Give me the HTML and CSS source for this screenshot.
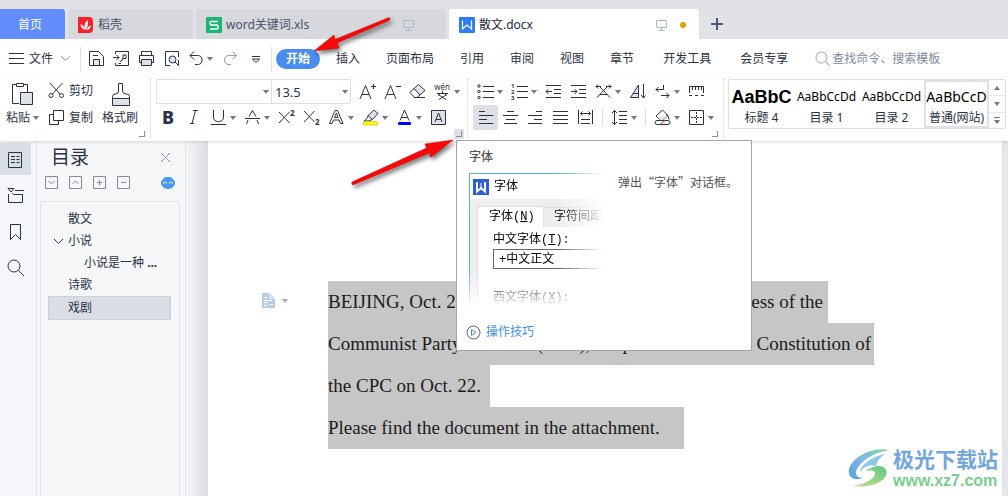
FILE: index.html
```html
<!DOCTYPE html>
<html lang="zh-CN">
<head>
<meta charset="utf-8">
<title>散文.docx</title>
<link rel="stylesheet" href="styles.css">
</head>
<body>
<header class="tabs">
  <button class="tab tab-home">首页</button>
  <button class="tab tab-docer">
    <svg width="16" height="16" viewBox="0 0 16 16"><rect width="15" height="16" rx="4" fill="#f5222d"/><path d="M0 0h8v8H0zM0 10h5v6H0z" fill="#f5222d"/><path d="M7.500 13C5.500 9 7 5.500 9.500 3c.800 4 .500 7-2 10zM7 13C4 12 2.500 9.500 2.500 7 5 8 6.500 10 7 13zM8.500 13c1-2.500 2.500-4 4.500-4.500-.2 2.500-2 4.500-4.500 4.500z" fill="#fff"/></svg>
    <span>稻壳</span>
  </button>
  <button class="tab tab-file">
    <svg width="16" height="16" viewBox="0 0 16 16"><rect width="16" height="16" rx="1" fill="#18b574"/><path d="M12 4.500H5q-1 0-1 1v1.500q0 1 1 1h6q1 0 1 1v2q0 1-1 1H4" fill="none" stroke="#fff" stroke-width="1.300"/></svg>
    <span>word关键词.xls</span>
    <svg class="screen" width="13" height="13" viewBox="0 0 13 13"><path d="M1.500 1.500h10v7h-10zM6.500 8.500v3M3.500 11.500h6"/></svg>
  </button>
  <button class="tab tab-file active">
    <svg width="16" height="16" viewBox="0 0 16 16"><rect width="16" height="16" rx="1" fill="#2f7df4"/><path d="M3.500 3.500v8.500l4.500-4 4.500 4V3.500" fill="none" stroke="#fff" stroke-width="1.200"/></svg>
    <span>散文.docx</span>
    <svg class="screen" width="13" height="13" viewBox="0 0 13 13"><path d="M1.500 1.500h10v7h-10zM6.500 8.500v3M3.500 11.500h6"/></svg>
    <i class="unsaved"></i>
  </button>
  <button class="tab-add" aria-label="新建"><svg width="14" height="14" viewBox="0 0 14 14"><path d="M1 7h12M7 1v12" stroke="#4b5873" stroke-width="2"/></svg></button>
</header>

<nav class="menu">
  <button class="file">
    <svg class="ic" width="17" height="17" viewBox="0 0 17 17"><path d="M1 3.500h15M1 8.500h15M1 13.500h15"/></svg>
    <span>文件</span>
    <svg class="ic pale" width="11" height="7" viewBox="0 0 11 7"><path d="M1 1l4.500 4.500L10 1"/></svg>
  </button>
  <div class="quick">
    <button aria-label="保存"><svg class="ic" width="17" height="17" viewBox="0 0 17 17"><path d="M5.500 9.500h6v6h-6z" class="soft"/><path d="M1.500 15.500v-14h9l5 5v9zM5 5.500h5"/></svg></button>
    <button aria-label="输出为PDF"><svg class="ic" width="17" height="17" viewBox="0 0 17 17"><path d="M2.500 4V1.500h13v14h-13V13M0 7.500h6M3.500 5L6 7.500 3.500 10M7 11.500q3-1 3-3.500v-3h3v3.500h-3M8 13.500h-2.500"/></svg></button>
    <button aria-label="打印"><svg class="ic" width="17" height="17" viewBox="0 0 17 17"><path d="M3.500 5V1.500h10V5M3.500 12.500h-2v-7h14v7h-2"/><path d="M3.500 9.500h10v6h-10z" class="soft"/></svg></button>
    <button aria-label="打印预览"><svg class="ic" width="17" height="17" viewBox="0 0 17 17"><path d="M7 15.500H2.500v-14h13V7M15.500 10v5.500"/><circle cx="9.500" cy="9.500" r="3.500" class="soft"/><path d="M12 12l3.500 3.500"/></svg></button>
    <button class="drop" aria-label="撤销"><svg class="ic" width="17" height="17" viewBox="0 0 17 17"><path d="M6 1.500l-4 4 4 4M2 5.500h7.500q4.500 0 4.500 4.500t-4.500 4.500H7"/></svg></button>
    <button aria-label="恢复"><svg class="ic pale" width="17" height="17" viewBox="0 0 17 17"><path d="M10.500 1.500l4 4-4 4M14.500 5.500H7q-4.500 0-4.500 4.500T7 14.500h2"/></svg></button>
    <button aria-label="自定义"><svg class="ic" width="17" height="17" viewBox="0 0 17 17"><path d="M5 6.500h8M5.500 9L9 12.500 12.500 9z"/></svg></button>
  </div>
  <div class="pages">
    <button class="on">开始</button>
    <button>插入</button>
    <button>页面布局</button>
    <button>引用</button>
    <button>审阅</button>
    <button>视图</button>
    <button>章节</button>
    <button>开发工具</button>
    <button>会员专享</button>
  </div>
  <label class="search">
    <svg class="ic" width="15" height="15" viewBox="0 0 15 15"><circle cx="6.500" cy="6.500" r="5.500"/><path d="M10.500 10.500l4 4"/></svg>
    <input type="text" placeholder="查找命令、搜索模板">
  </label>
</nav>

<section class="ribbon">
  <div class="group clip">
    <button class="big paste">
      <svg class="ic" width="23" height="25" viewBox="0 0 23 25"><path d="M8 21.500H1.500v-19h4M12.500 2.500h4V10M5.500 1.500h7v3h-7z"/><path d="M9.500 10.500h12v12h-12z" class="soft"/></svg>
      <span class="drop-text">粘贴</span>
    </button>
    <div class="stack">
      <button><svg class="ic" width="17" height="17" viewBox="0 0 17 17"><circle cx="3" cy="13.500" r="2"/><circle cx="13.500" cy="13.500" r="2"/><path d="M2 1l10 11M14.500 1l-10 11"/></svg><span>剪切</span></button>
      <button><svg class="ic" width="17" height="17" viewBox="0 0 17 17"><path d="M5.500 1.500h10v10h-10zM5.500 5.500h-4v10h9v-4"/></svg><span>复制</span></button>
    </div>
    <button class="big">
      <svg class="ic" width="23" height="25" viewBox="0 0 23 25"><path d="M3.500 16.500v7h17v-7z" class="soft"/><path d="M9.500 9V1.500h4V9q0 3 4 3 3 0 3 2.500v2h-17v-2q0-2.500 3-2.500 3 0 3-3z"/></svg>
      <span>格式刷</span>
    </button>
    <button class="launch" aria-label="剪贴板设置"></button>
  </div>

  <div class="group font">
    <div class="row">
      <div class="combo"><input type="text" aria-label="字体"><i class="caret"></i></div>
      <div class="combo size"><input type="text" aria-label="字号" value="13.5"><i class="caret"></i></div>
      <div class="tools">
        <button aria-label="增大字号"><svg class="ic" width="17" height="17" viewBox="0 0 17 17"><path d="M1 16L6.500 2.500 12 16M3 11.500h7M12 3.500h5M14.500 1v5"/></svg></button>
        <button aria-label="减小字号"><svg class="ic" width="17" height="17" viewBox="0 0 17 17"><path d="M1 16L6.500 2.500 12 16M3 11.500h7M12 3.500h5"/></svg></button>
        <button aria-label="清除格式"><svg class="ic" width="17" height="17" viewBox="0 0 17 17"><path d="M5 5.500L9.500 1.500l6.500 6-5 4.500z" class="soft"/><path d="M5 5.500L.800 9.500l5 5H8l3-2.500M5 14.500h11"/></svg></button>
        <button class="drop" aria-label="拼音"><svg class="ic" width="17" height="17" viewBox="0 0 17 17"><text x="8" y="7" font-size="8" text-anchor="middle">wén</text><path d="M8.500 8v2M3 10.500h11M6 11l-2 1.500M11 11l2 1.500M5 12l7 4.500M12 12l-7 4.500"/></svg></button>
      </div>
    </div>
    <div class="row">
      <button aria-label="加粗"><svg class="ic" width="17" height="17" viewBox="0 0 17 17"><text x="8" y="15" font-size="18" font-weight="800" text-anchor="middle">B</text></svg></button>
      <button aria-label="倾斜"><svg class="ic" width="17" height="17" viewBox="0 0 17 17"><path d="M8 1.500h5M5 14.500h4M10.500 1.500L7 14.500"/></svg></button>
      <button class="drop" aria-label="下划线"><svg class="ic" width="17" height="17" viewBox="0 0 17 17"><path d="M3.500 1v7q0 4.500 5 4.500t5-4.500V1M1 15.500h15"/></svg></button>
      <button class="drop" aria-label="删除线"><svg class="ic" width="17" height="17" viewBox="0 0 17 17"><path d="M5 7.500L8.500 1.500l3.500 6M1 9.500h15M4 11l-1.500 4M13 11l1.500 4"/></svg></button>
      <button aria-label="上标"><svg class="ic" width="17" height="17" viewBox="0 0 17 17"><path d="M1 3l10.500 11M11.500 3L1 14"/><text x="12" y="7" font-size="8" font-weight="700">2</text></svg></button>
      <button aria-label="下标"><svg class="ic" width="17" height="17" viewBox="0 0 17 17"><path d="M1 2l10.500 11M11.500 2L1 13"/><text x="12" y="16" font-size="8" font-weight="700">2</text></svg></button>
      <button class="drop" aria-label="文字效果"><svg class="ic" width="17" height="17" viewBox="0 0 17 17"><path d="M1.500 14.500L7 1.500h2.500L15 14.500h-2.500L11 11H5.500L4 14.500zM6.500 8.500h3.500L8.300 4z"/></svg></button>
      <button class="drop" aria-label="突出显示"><svg class="ic" width="17" height="17" viewBox="0 0 17 17"><path d="M6 6.500L12 1l4 3.500-5.500 6z" class="soft"/><path d="M6 6.500l-1 3-3 2.500h5l3-1.500"/><rect x="1" y="12.500" width="15" height="3.500" rx="1.500" class="yellow"/></svg></button>
      <button class="drop" aria-label="字体颜色"><svg class="ic" width="17" height="17" viewBox="0 0 17 17"><path d="M4 11.500L8.500 1 13 11.500M5.500 8.500h6"/><rect x="2" y="13" width="13" height="3" rx="1" class="blue"/></svg></button>
      <button aria-label="字符底纹"><svg class="ic" width="17" height="17" viewBox="0 0 17 17"><path d="M1.500 1.500h14v14h-14z" class="soft"/><path d="M5 13l3.500-9 3.500 9M6 10.500h5"/></svg></button>
    </div>
    <button class="launch hover" aria-label="字体设置"></button>

    <aside class="tip" role="tooltip">
      <h2>字体</h2>
      <div class="tip-body">
        <div class="shot">
          <div class="shot-title">
            <svg width="16" height="16" viewBox="0 0 16 16"><rect width="16" height="16" fill="#2c5fd6"/><path d="M4 3v9.500l4-3.500 4 3.500V3" fill="none" stroke="#fff" stroke-width="2"/><path d="M8 4v6" stroke="#fff"/></svg>
            <span>字体</span>
          </div>
          <div class="shot-tabs"><span class="cur">字体(<u>N</u>)</span><span class="next">字符间距</span></div>
          <div class="shot-form">
            <p>中文字体(<u>T</u>):</p>
            <div class="field">+中文正文</div>
            <p class="west">西文字体(<u>X</u>):</p>
          </div>
        </div>
        <p class="note">弹出“字体”对话框。</p>
      </div>
      <a class="more" href="#"><svg width="15" height="15" viewBox="0 0 15 15" fill="none"><circle cx="7.500" cy="7.500" r="6.500" stroke="#666"/><path d="M5.500 4.500v6l4.500-3z" stroke="#3d8df5"/></svg><span>操作技巧</span></a>
    </aside>
  </div>

  <div class="group para">
    <div class="row">
      <button class="drop" aria-label="项目符号"><svg class="ic" width="17" height="17" viewBox="0 0 17 17"><path d="M6 3.500h11M6 8.500h11M6 14.500h11"/><circle cx="2" cy="3" r="1.200"/><circle cx="2" cy="8.500" r="1.200"/><circle cx="2" cy="14.500" r="1.200"/></svg></button>
      <button class="drop" aria-label="编号"><svg class="ic" width="17" height="17" viewBox="0 0 17 17"><path d="M6 3.500h11M6 8.500h11M6 14.500h11"/><g font-size="6" font-weight="700"><text x="0" y="5">1</text><text x="0" y="11">2</text><text x="0" y="17">3</text></g></svg></button>
      <button aria-label="减少缩进"><svg class="ic" width="17" height="17" viewBox="0 0 17 17"><path d="M1 2.500h15M9 6.500h7M9 10.500h7M1 14.500h15M1 8.500h6M3.500 6L1 8.500 3.500 11"/></svg></button>
      <button aria-label="增加缩进"><svg class="ic" width="17" height="17" viewBox="0 0 17 17"><path d="M1 2.500h15M9 6.500h7M9 10.500h7M1 14.500h15M1 8.500h6M4.500 6L7 8.500 4.500 11"/></svg></button>
      <button class="drop" aria-label="中文版式"><svg class="ic" width="17" height="17" viewBox="0 0 17 17"><path d="M1 3.500h5M3 1.500l-2 2 2 2M16 3.500h-5M14 1.500l2 2-2 2M2 14.500L12 4M15 14.500L5 4M5 11.500h7"/></svg></button>
      <button aria-label="排序"><svg class="ic" width="17" height="17" viewBox="0 0 17 17"><path d="M1.500 14.500L9.500 2v12.500zM4 10.500h5.500" class="soft"/><path d="M14.500 1v14M12 12l2.500 3 2-2.500"/></svg></button>
      <button class="drop" aria-label="换行符"><svg class="ic" width="17" height="17" viewBox="0 0 17 17"><path d="M9.500 2v4.500H2M4.500 4L2 6.500 4.500 9M7 12.500h8M12.500 10l2.500 2.500-2.500 2.500"/></svg></button>
      <button aria-label="标尺"><svg class="ic" width="17" height="17" viewBox="0 0 17 17"><path d="M1.500 10V3.500h14V10M4.500 4v3M7.500 4v3M10.500 4v3M13.500 4v3M1 12.500h3M7 12.500h3M13 12.500h3"/></svg></button>
    </div>
    <div class="row">
      <button class="pressed" aria-label="左对齐"><svg class="ic" width="17" height="17" viewBox="0 0 17 17"><path d="M2 2.500h6M2 6.500h14M2 10.500h8M2 14.500h14"/></svg></button>
      <button aria-label="居中"><svg class="ic" width="17" height="17" viewBox="0 0 17 17"><path d="M5 2.500h7M1 6.500h15M4 10.500h9M2 14.500h13"/></svg></button>
      <button aria-label="右对齐"><svg class="ic" width="17" height="17" viewBox="0 0 17 17"><path d="M9 2.500h6M1 6.500h14M7 10.500h8M1 14.500h14"/></svg></button>
      <button aria-label="两端对齐"><svg class="ic" width="17" height="17" viewBox="0 0 17 17"><path d="M1 2.500h15M1 6.500h15M1 10.500h15M1 14.500h15"/></svg></button>
      <button aria-label="分散对齐"><svg class="ic" width="17" height="17" viewBox="0 0 17 17"><path d="M1.500 1v14M15.500 1v14M3 4.500h11M5.500 2.500l-2 2 2 2M11.500 2.500l2 2-2 2M4 10.500h9M4 14.500h9"/></svg></button>
      <i class="split"></i>
      <button class="drop" aria-label="行距"><svg class="ic" width="17" height="17" viewBox="0 0 17 17"><path d="M3.500 1.500v14M1 4l2.500-2.500L6 4M1 13l2.500 2.500L6 13M8 2.500h8M8 6.500h8M8 10.500h8M8 14.500h8"/></svg></button>
      <i class="split"></i>
      <button class="drop" aria-label="底纹"><svg class="ic" width="17" height="17" viewBox="0 0 17 17"><path d="M2 7L8.500 1 14 6.500 9 11H6z"/><path d="M3 7.500h10l-4 3.500H6z" fill="#dfe2e7" stroke="none"/><path d="M12 5.500q3 1 3 5M3 11.500h11q2 0 2 2t-2 2H3q-2 0-2-2t2-2z"/><path d="M6 15.500l5-4" stroke="#e33"/></svg></button>
      <button class="drop" aria-label="边框"><svg class="ic" width="17" height="17" viewBox="0 0 17 17"><path d="M1.500 1.500h14v14h-14z"/><path d="M8.500 3v11M3 8.500h11" stroke-dasharray="2 1"/></svg></button>
    </div>
    <button class="launch" aria-label="段落设置"></button>
  </div>

  <div class="gallery">
    <button><b class="s-title">AaBbC</b><span>标题 4</span></button>
    <button><b>AaBbCcDd</b><span>目录 1</span></button>
    <button><b>AaBbCcDd</b><span>目录 2</span></button>
    <button class="chosen"><b class="s-web">AaBbCcD</b><span>普通(网站)</span></button>
    <div class="scroll">
      <button class="up" aria-label="上一行"></button>
      <button aria-label="下一行"></button>
      <button class="all" aria-label="更多样式"></button>
    </div>
  </div>
</section>

<main class="work">
  <nav class="rail">
    <button class="on" aria-label="目录"><svg class="ic" width="17" height="17" viewBox="0 0 17 17"><path d="M1.500 1.500h13v15h-13zM4 5.500h4M4 8.500h4M4 11.500h4M9.500 5.500h3M9.500 8.500h3M9.500 11.500h3"/></svg></button>
    <button aria-label="章节"><svg class="ic" width="17" height="17" viewBox="0 0 17 17"><path d="M1 1.500h6L4 5zM8 3.500h9M1.500 7v8.500h14v-8h-9L5 6"/></svg></button>
    <button aria-label="书签"><svg class="ic" width="17" height="17" viewBox="0 0 17 17"><path d="M3.500 1.500h10v15L8.500 11.500l-5 5z"/></svg></button>
    <button aria-label="查找"><svg class="ic" width="17" height="17" viewBox="0 0 17 17"><circle cx="7" cy="7" r="6"/><path d="M11.500 11.500L17 17"/></svg></button>
  </nav>
  <aside class="outline">
    <div class="outline-head">
      <h1>目录</h1>
      <button aria-label="关闭"><svg class="ic pale" width="11" height="11" viewBox="0 0 11 11"><path d="M1 1l9 9M10 1l-9 9"/></svg></button>
    </div>
    <div class="outline-tools">
      <button aria-label="展开"><svg width="13" height="13" viewBox="0 0 13 13"><path d="M.500.500h12v12H.500zM3.500 5l3 3 3-3"/></svg></button>
      <button aria-label="收起"><svg width="13" height="13" viewBox="0 0 13 13"><path d="M.500.500h12v12H.500zM3.500 8l3-3 3 3"/></svg></button>
      <button aria-label="增加"><svg width="13" height="13" viewBox="0 0 13 13"><path d="M.500.500h12v12H.500zM4 6.500h5M6.500 4v5"/></svg></button>
      <button aria-label="减少"><svg width="13" height="13" viewBox="0 0 13 13"><path d="M.500.500h12v12H.500zM4 6.500h5"/></svg></button>
      <button class="smart" aria-label="智能识别目录"><svg width="14" height="12" viewBox="0 0 14 12"><rect x="1" width="12" height="12" rx="5" fill="#4a9af5" stroke="none"/><rect y="3" width="14" height="6" rx="2" fill="#4a9af5" stroke="none"/><path d="M2 6.500L4 5l2 1.500M8 6.500L10 5l2 1.500" stroke="#fff"/></svg></button>
    </div>
    <ul class="tree">
      <li>散文</li>
      <li class="open"><svg class="ic" width="11" height="7" viewBox="0 0 11 7"><path d="M1 1l4.500 4.500L10 1"/></svg>小说</li>
      <li class="deep">小说是一种 <b>...</b></li>
      <li>诗歌</li>
      <li class="picked">戏剧</li>
    </ul>
  </aside>
  <div class="canvas">
    <article class="sheet">
      <button class="para-mark" aria-label="段落布局"><svg width="13" height="15" viewBox="0 0 13 15"><path d="M0 0h8l5 5v10H0z" fill="#b7cbea"/><path d="M8 0v5h5M2 4.500h4M2 7.500h8M2 9.500h4M7 11.500h4M2 12.500h4" fill="none" stroke="#fff"/></svg><i class="caret"></i></button>
      <div class="text">
        <p class="l1"><span>BEIJING, Oct. 26</span><span>ess of the</span></p>
        <p class="l2"><span>Communist Party of China (CPC), adopted</span><span>Constitution of</span></p>
        <p class="l3">the CPC on Oct. 22.</p>
        <p class="l4">Please find the document in the attachment.</p>
      </div>
    </article>
  </div>
</main>

<div class="mark">
  <svg width="46" height="42" viewBox="0 0 46 42"><defs><linearGradient id="a" x1="0" y1="1" x2="1" y2="0"><stop offset="0" stop-color="#5a9fe0"/><stop offset=".5" stop-color="#7db8e8"/><stop offset="1" stop-color="#7fd9a0"/></linearGradient><linearGradient id="b" x1="0" y1="1" x2="1" y2="0"><stop offset="0" stop-color="#c9e08a"/><stop offset="1" stop-color="#5fc888"/></linearGradient></defs><path d="M42 3C22-1 0 14 2 26c1 7 9 7 14 5-8 0-9-6-4-12C18 11 30 5 42 3z" fill="url(#a)"/><path d="M38 7C27 9 14 17 13 25c4-6 10-8 16-6 1-5 4-9 9-12z" fill="#8cc6ea"/><path d="M19 24c5-5 17-8 20-1 4 9-13 19-34 16 12-1 22-7 23-12 1-4-5-4-9-3z" fill="url(#b)"/></svg>
  <div><strong>极光下载站</strong><span>www.xz7.com</span></div>
</div>
<svg class="arrow arrow-a" width="88" height="46" viewBox="0 0 88 46"><path d="M3 38L23 22l1 4.500L78 4.500q2 1 0 3L26 30l2 5z"/></svg>
<svg class="arrow arrow-b" width="112" height="56" viewBox="0 0 112 56"><path d="M105 5L77 9l1.500 4L4 47q-1 2 1 3l76-32 2 4z"/></svg>
</body>
</html>
```
FILE: styles.css
```css
* { box-sizing: border-box; }
body {
  margin: 0;
  min-height: 100vh;
  display: flex;
  flex-direction: column;
  position: relative;
  overflow: hidden;
  background: #fff;
  color: #2b3245;
  font: 12px/16px "Noto Sans", "Noto Sans CJK SC", sans-serif;
}
button {
  border: 0;
  padding: 0;
  background: none;
  color: inherit;
  font: inherit;
  white-space: nowrap;
}
input { border: 0; padding: 0; background: none; color: inherit; font: inherit; min-width: 0; outline: 0; }
h1, h2, p, ul { margin: 0; padding: 0; font-weight: 400; }
svg { display: block; flex: none; }
.ic { fill: none; stroke: #2b3245; overflow: visible; }
.ic text { fill: #2b3245; stroke: none; font-family: "Noto Sans", sans-serif; }
.ic .soft { fill: #dfe2e7; }
.ic .yellow { fill: #ff0; stroke: #b5a900; stroke-width: .5; }
.ic .blue { fill: #00f; stroke: none; }
.ic.pale { stroke: #9aa0ac; }
.caret, .drop::after, .drop-text::after, .scroll button::before {
  content: "";
  border: 3px solid transparent;
  border-top: 4px solid #6f7b94;
  border-bottom: 0;
}

/* Document tabs */
.tabs { display: flex; gap: 3px; padding-top: 9px; background: #e1e2e6; }
.tab { display: flex; align-items: center; gap: 4px; height: 30px; padding: 2px 10px 0; border-radius: 3px 3px 0 0; background: #d7d8dc; color: #47536b; }
.tab-home { width: 65px; justify-content: center; border-radius: 0 3px 0 0; padding: 2px 5px 0 0; background: #618dfb; color: #fff; }
.tab-docer { width: 125px; }
.tab-file { width: 250px; }
.tab.active { background: #fff; color: #20283a; }
.screen { margin-left: auto; margin-right: 21px; fill: none; stroke: #b0b8cb; }
.active .screen { margin-right: 8px; }
.unsaved { width: 6px; height: 6px; margin-right: 3px; border-radius: 50%; background: #ec9a00; }
.tab-add { padding: 0 8px; }

/* Menu bar */
.menu { display: flex; align-items: center; height: 39px; padding-left: 8px; }
.file { display: flex; align-items: center; gap: 4px; padding-right: 9px; }
.file .pale { margin-left: 3px; }
.quick { display: flex; align-items: center; height: 24px; padding: 0 3px; border: solid #dcdfe4; border-width: 0 1px; }
.quick button { display: flex; align-items: center; justify-content: center; width: 25px; height: 24px; }
.quick .drop { width: 34px; padding-left: 4px; justify-content: flex-start; }
.quick .drop::after { margin-left: 2px; }
.pages { display: flex; align-items: center; gap: 26px; margin-left: 4px; }
.pages button:nth-last-child(-n+2) { margin-left: 3px; }
.pages .on { padding: 2px 10px; margin-right: -10px; border-radius: 10px; background: #4a8df0; color: #fff; font-weight: 700; }
.search { display: flex; align-items: center; gap: 2px; flex: 1; margin-left: 27px; }
.search .ic { stroke: #98a2b8; }
.search input { flex: 1; }
.search input::placeholder { color: #818b9f; opacity: 1; }

/* Ribbon */
.ribbon { display: flex; position: relative; z-index: 2; height: 63px; background: #fff; box-shadow: 0 1px 3px #0002; }
.group { position: relative; flex: none; padding: 1px 5px 0; border-right: 1px solid #e6e8eb; margin-bottom: 3px; }
.font { padding-right: 3px; }
.row { display: flex; height: 25px; margin-bottom: 1px; }
.row button { display: flex; align-items: center; width: 25px; height: 25px; padding-left: 4px; }
.row .drop { width: 34px; }
.row .drop::after { margin-left: 3px; }
.row .pressed { background: #dde1e6; border-radius: 2px; }
.row .split { width: 1px; margin: 4px; background: #dcdfe4; }
.tools { display: flex; margin-left: 4px; }
.clip { display: flex; width: 151px; padding: 4px 0 0 6px; gap: 9px; }
.big { display: flex; flex-direction: column; align-items: center; gap: 3px; align-self: flex-start; }
.paste { align-items: flex-start; }
.paste .ic { margin-left: 5px; }
.drop-text { display: flex; align-items: center; }
.drop-text::after { margin-left: 3px; }
.stack { display: flex; flex-direction: column; gap: 10px; }
.stack button { display: flex; align-items: center; gap: 4px; height: 17px; }
.launch { position: absolute; right: 3px; bottom: -1px; width: 10px; height: 10px; }
.launch::after { content: ""; position: absolute; right: 2px; bottom: 2px; width: 5px; height: 5px; border: solid #8490a6; border-width: 0 1px 1px 0; }
.launch.hover { background: #dfe1e4; }
.combo { display: flex; align-items: center; width: 116px; height: 25px; padding: 0 2px 0 4px; border: 1px solid #dcdfe4; }
.combo input { flex: 1; font-size: 13px; }
.combo.size { width: 79px; border-left: 0; border-radius: 0 2px 2px 0; padding-left: 3px; }

.gallery { display: flex; align-self: flex-start; margin: 1px 0 0 4px; border: 1px solid #dcdfe4; border-radius: 2px; }
.gallery > button { display: flex; flex-direction: column; align-items: center; gap: 2px; width: 65px; height: 48px; padding-top: 6px; }
.gallery b { font-weight: 400; color: #000; line-height: 22px; }
.gallery .s-title { font: 700 18px/22px "Liberation Sans", sans-serif; }
.gallery .s-web { font-size: 14px; }
.gallery .chosen { border: 2px solid #dfe1e6; padding-top: 4px; }
.scroll { display: flex; flex-direction: column; width: 16px; }
.scroll button { display: flex; flex-direction: column; align-items: center; justify-content: center; flex: 1; }
.scroll button + button { border-top: 1px solid #e6e8eb; }
.scroll .up::before { transform: rotate(180deg); }
.scroll .all::before { order: 2; }
.scroll .all::after { content: ""; width: 6px; height: 1px; margin-bottom: 2px; background: #6f7b94; }

/* Tooltip of the font launcher */
.tip { position: absolute; top: 62px; left: 305px; width: 296px; height: 211px; padding: 8px 12px; border: 1px solid #a3a5a7; background: #fff; color: #555; }
.tip h2 { font-size: 12px; line-height: 16px; font-weight: 500; }
.tip-body { display: flex; gap: 12px; margin-top: 8px; }
.shot {
  width: 137px;
  height: 140px;
  flex: none;
  overflow: hidden;
  border: solid #55b4c4;
  border-width: 1px 0 0 1px;
  background: #eee;
  color: #000;
  white-space: nowrap;
  font-family: "Liberation Mono", "Noto Sans CJK SC", monospace;
  font-size: 12px;
  -webkit-mask-image: linear-gradient(to right, #000 65%, transparent 98%), linear-gradient(#000 70%, transparent 96%);
  -webkit-mask-composite: source-in;
  mask-image: linear-gradient(to right, #000 65%, transparent 98%), linear-gradient(#000 70%, transparent 96%);
  mask-composite: intersect;
}
.shot-title { display: flex; align-items: center; gap: 5px; height: 25px; padding-left: 3px; background: #fff; }
.shot-tabs { display: flex; align-items: flex-end; padding: 7px 0 0 7px; line-height: 20px; }
.shot-tabs .cur { width: 67px; padding-left: 11px; border: solid #ddd; border-width: 1px 1px 0; background: #fff; }
.shot-tabs .next { flex: 1; padding-left: 10px; border-top: 1px solid #ddd; line-height: 19px; }
.shot-form { margin-left: 7px; height: 100px; padding: 5px 0 0 15px; border-left: 1px solid #ddd; background: #fff; }
.field { height: 20px; margin: 1px 0 21px; padding-left: 5px; border: 1px solid #666; line-height: 20px; }
.note { padding-top: 1px; font-family: "Noto Sans CJK SC", sans-serif; white-space: nowrap; }
.more { display: flex; align-items: center; gap: 5px; margin: 11px 0 0 -3px; color: #3d8df5; text-decoration: none; }

/* Work area */
.work { display: flex; flex: 1; }
.rail { display: flex; flex-direction: column; width: 37px; gap: 4px; padding-top: 2px; background: #f4f6f9; border-right: 1px solid #e1e4e9; }
.rail button { display: flex; align-items: center; justify-content: center; width: 31px; height: 32px; }
.rail .on { background: #d9dee5; }
.outline { display: flex; flex-direction: column; width: 149px; padding: 3px 5px 0 3px; background: #f5f7f9; border-right: 1px solid #e1e4e9; }
.outline-head { display: flex; align-items: center; justify-content: space-between; padding: 0 9px 0 11px; }
.outline h1 { font-size: 19px; line-height: 26px; }
.outline-tools { display: flex; align-items: center; gap: 11px; padding: 6px 5px 12px; }
.outline-tools svg { fill: none; stroke: #858b96; }
.smart { margin-left: auto; }
.tree { flex: 1; padding: 6px 8px 0 7px; border: 1px solid #e1e4e9; border-bottom: 0; border-radius: 3px 3px 0 0; list-style: none; }
.tree li { display: flex; align-items: center; height: 22px; padding-left: 20px; white-space: pre; }
.tree .open { padding-left: 5px; gap: 4px; }
.tree .deep { padding-left: 36px; }
.tree .picked { height: 24px; padding-left: 19px; border: 1px solid #c9d0da; background: #d9dee5; }
.canvas { flex: 1; display: flex; padding: 0 6px 0 22px; background: linear-gradient(to right, #f4f5f7, #dcdee2 22px, #e4e6ea 23px); }
.sheet { display: flex; flex: 1; align-items: flex-start; gap: 40px; padding: 140px 40px 0 54px; background: #fff; }
.para-mark { display: flex; align-items: center; gap: 7px; margin-top: 12px; }
.para-mark .caret { border-top-color: #a9abae; }
.text { color: #1c1c1c; font: 19px/42px "Liberation Serif", serif; white-space: nowrap; }
.text p { display: flex; justify-content: space-between; height: 42px; background: #c6c6c6; }
.text .l1 { width: 500px; padding-right: 5px; }
.text .l2 { width: 546px; padding-right: 3px; }
.text .l3 { width: 162px; }
.text .l4 { width: 356px; }

/* Site mark and pointers */
.mark { position: absolute; right: 10px; bottom: 6px; z-index: 3; display: flex; align-items: center; }
.mark div { display: flex; flex-direction: column; }
.mark strong { color: #72a7dc; font-size: 21px; line-height: 26px; }
.mark span { color: #7ace8e; font: 700 16px/18px "Liberation Sans", sans-serif; }
.arrow { position: absolute; z-index: 4; fill: #f80808; stroke: #c00; stroke-width: .5; filter: drop-shadow(2px 3px 2px #0008); pointer-events: none; }
.arrow-a { left: 311px; top: 13px; }
.arrow-b { left: 348px; top: 135px; }
```
